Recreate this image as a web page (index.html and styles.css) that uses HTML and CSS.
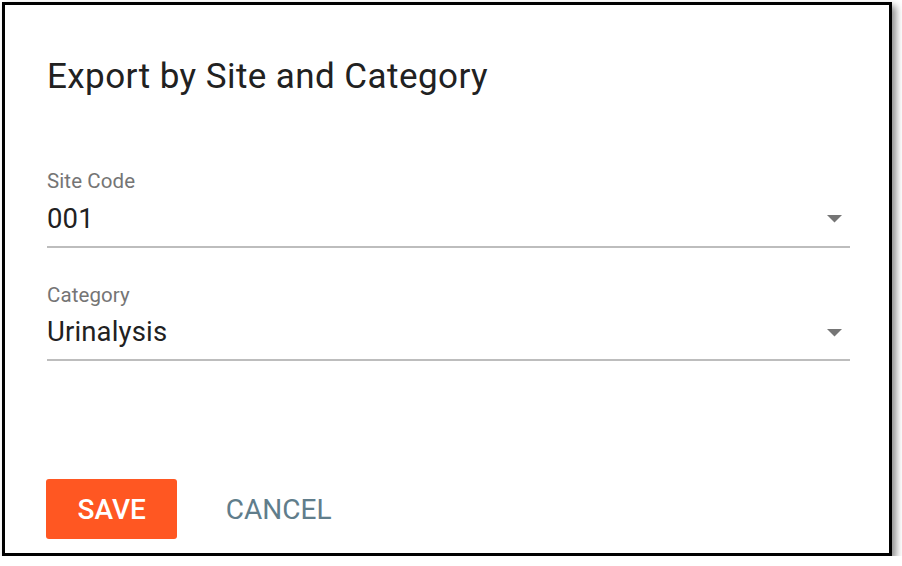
FILE: index.html
```html
<!DOCTYPE html>
<html>
<head>
<meta charset="utf-8">
<link rel="stylesheet" href="styles.css">
</head>
<body>
<div class="dialog">
  <h1 class="title">Export by Site and Category</h1>
  <div class="field field-first">
    <div class="label">Site Code</div>
    <div class="select">
      <span class="value">001</span>
      <svg class="arrow" width="15" height="8" viewBox="0 0 15 8"><path d="M0 0 L15 0 L7.5 7.5 Z" fill="#757575"/></svg>
    </div>
  </div>
  <div class="field">
    <div class="label">Category</div>
    <div class="select">
      <span class="value">Urinalysis</span>
      <svg class="arrow" width="15" height="8" viewBox="0 0 15 8"><path d="M0 0 L15 0 L7.5 7.5 Z" fill="#757575"/></svg>
    </div>
  </div>
  <div class="actions">
    <button class="btn btn-save">SAVE</button>
    <button class="btn btn-cancel">CANCEL</button>
  </div>
</div>
</body>
</html>
```

FILE: styles.css
```css
html, body {
  margin: 0;
  padding: 0;
  background: #ffffff;
}
body {
  font-family: Roboto, "Liberation Sans", sans-serif;
}
.dialog {
  box-sizing: border-box;
  margin: 2px 0 0 2px;
  width: 890px;
  height: 554px;
  border: 3px solid #000;
  background: #fff;
  box-shadow: 4px 4px 7px rgba(0, 0, 0, 0.45);
  padding: 52px 39px 0 42px;
  display: flex;
  flex-direction: column;
}
.title {
  margin: 0;
  font-size: 35px;
  line-height: 40px;
  letter-spacing: 0.43px;
  font-weight: 400;
  color: #212121;
}
.field {
  width: 803px;
  margin-top: 35px;
}
.field-first {
  margin-top: 72px;
}
.label {
  font-size: 20.5px;
  line-height: 24px;
  letter-spacing: 0.1px;
  color: #757575;
}
.select {
  margin-top: 9.7px;
  display: flex;
  align-items: center;
  justify-content: space-between;
  padding-bottom: 11px;
  border-bottom: 2px solid #bdbdbd;
}
.value {
  font-size: 27.5px;
  line-height: 32px;
  letter-spacing: 0.15px;
  color: #212121;
}
.arrow {
  display: block;
  margin-right: 8px;
  margin-top: 1px;
}
.actions {
  margin-top: 118px;
  margin-left: -1px;
  display: flex;
  gap: 17px;
}
.btn {
  font-family: Roboto, "Liberation Sans", sans-serif;
  font-size: 28px;
  font-weight: 400;
  height: 60px;
  padding: 0 31.5px;
  border: none;
  border-radius: 3px;
  background: transparent;
  cursor: pointer;
}
.btn-save {
  background: #ff5722;
  color: #fff;
  font-weight: 500;
}
.btn-cancel {
  color: #607d8b;
}
```
